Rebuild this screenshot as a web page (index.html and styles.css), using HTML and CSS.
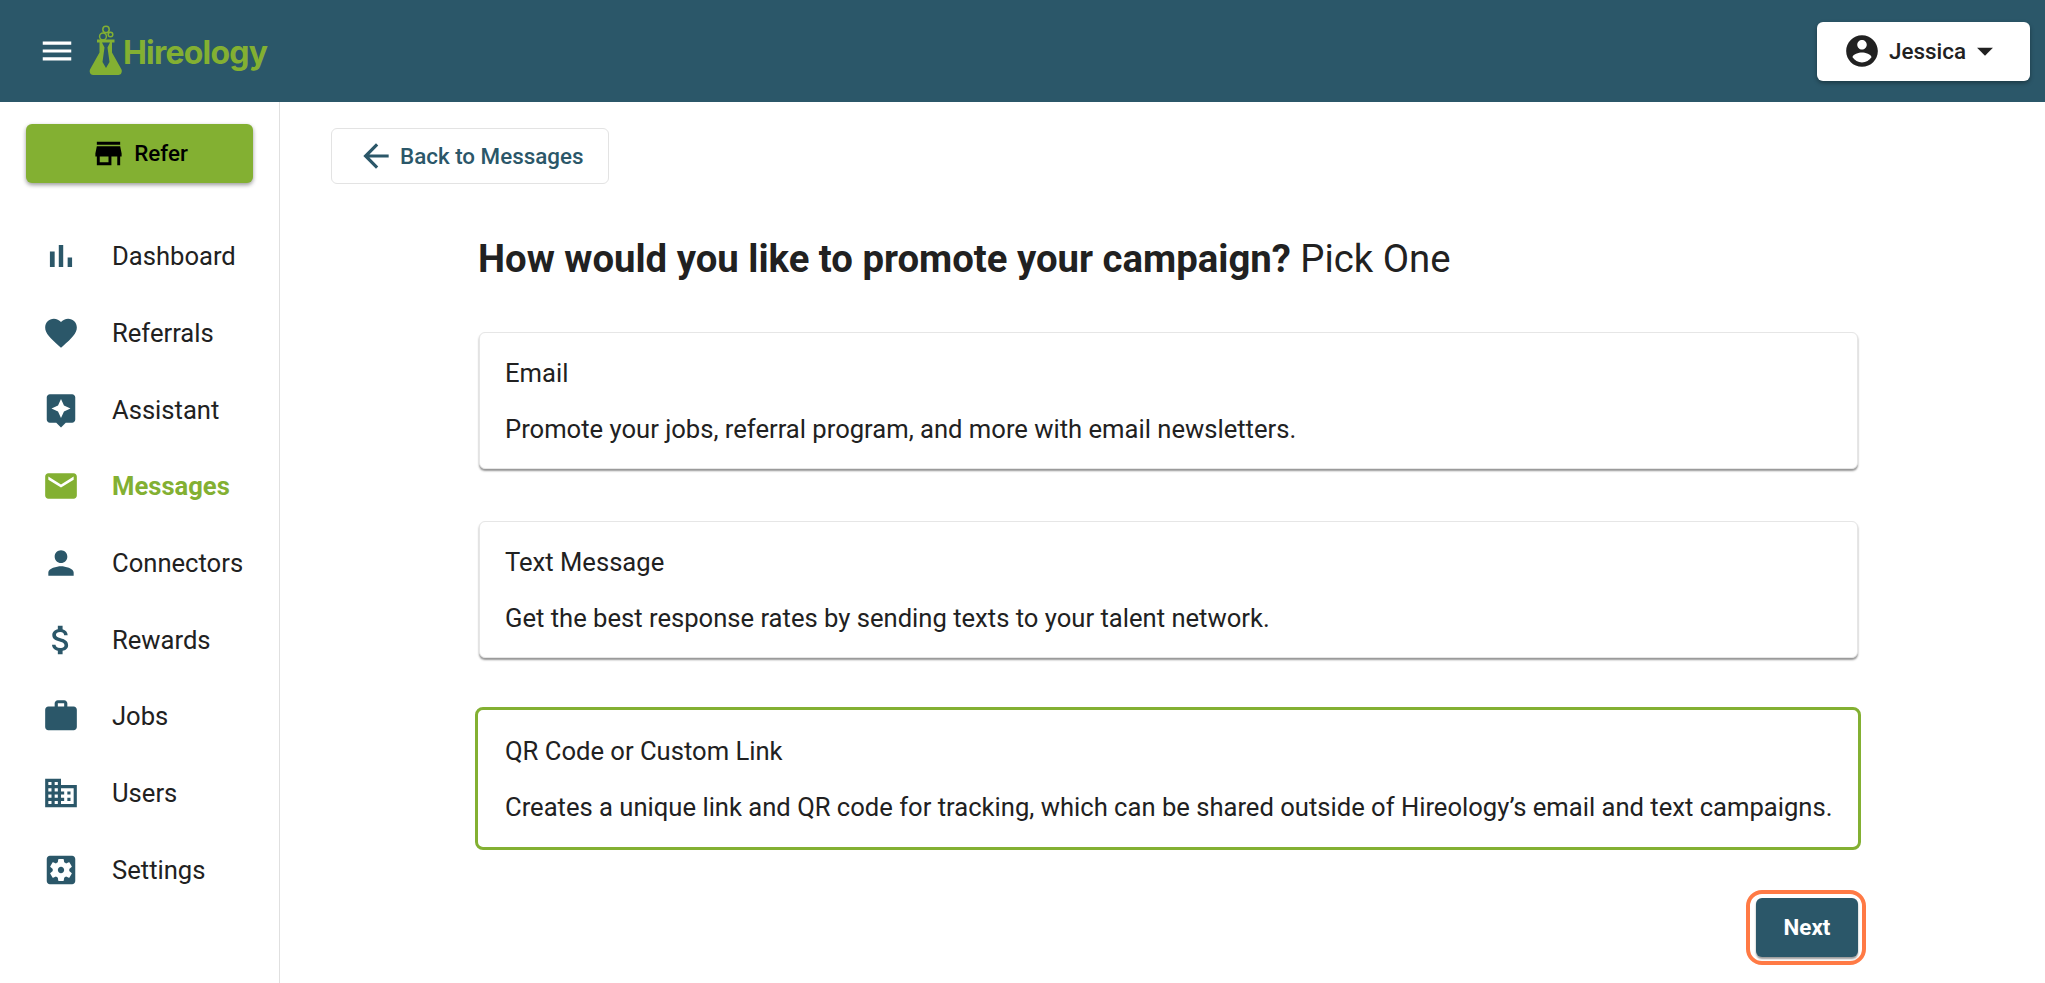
FILE: index.html
```html
<!DOCTYPE html>
<html lang="en">
<head>
    <meta charset="UTF-8">
    <title>Hireology - Promote your campaign</title>
    <link rel="stylesheet" href="styles.css">
</head>
<body>

<header class="topbar">
    <div class="topbar-left">
        <svg class="icon menu-icon" viewBox="0 0 24 24"><path d="M3 18h18v-2H3v2zm0-5h18v-2H3v2zm0-7v2h18V6H3z"/></svg>
        <div class="logo">
            <svg class="logo-flask" viewBox="0 0 34 52">
                <circle cx="17" cy="5.5" r="3.2" fill="none" stroke="#83b032" stroke-width="1.5"/>
                <circle cx="14" cy="12.5" r="3.4" fill="none" stroke="#83b032" stroke-width="1.5"/>
                <circle cx="21.5" cy="10.5" r="2.3" fill="none" stroke="#83b032" stroke-width="1.5"/>
                <path fill="#83b032" fill-rule="evenodd" d="M8 15.5h17.500v3h-2.500v10l9.500 17c1 2.500-.5 5.500-3 5.500H4c-2.500 0-4-3-3-5.500l9.500-17v-10H8zM13 18.500l2.500 5-2 14.500 3.500 6 3.500-6-2-14.500 2.500-5z"/>
            </svg>
            <span class="logo-text">Hireology</span>
        </div>
    </div>
    <button class="user-btn">
        <svg class="icon" viewBox="0 0 24 24"><path d="M12 2C6.480 2 2 6.480 2 12s4.480 10 10 10 10-4.480 10-10S17.520 2 12 2zm0 3c1.660 0 3 1.340 3 3s-1.340 3-3 3-3-1.340-3-3 1.340-3 3-3zm0 14.200c-2.500 0-4.710-1.280-6-3.220.030-1.990 4-3.080 6-3.080 1.990 0 5.970 1.090 6 3.080-1.290 1.940-3.500 3.220-6 3.220z"/></svg>
        <span>Jessica</span>
        <svg class="icon caret" viewBox="0 0 24 24"><path d="M7 10l5 5 5-5z"/></svg>
    </button>
</header>

<div class="layout">
    <aside class="sidebar">
        <button class="refer-btn">
            <svg class="refer-icon" viewBox="0 0 24 24"><path d="M20 4H4v2h16V4zm1 10v-2l-1-5H4l-1 5v2h1v6h10v-6h4v6h2v-6h1zm-9 4H6v-4h6v4z"/></svg>
            <span class="refer-label">Refer</span>
        </button>
        <nav class="nav">
            <a class="nav-item">
                <svg class="icon" viewBox="0 0 24 24"><path d="M5 9.200h3V19H5zM10.600 5h2.800v14h-2.800zm5.600 8H19v6h-2.800z"/></svg>
                <span>Dashboard</span>
            </a>
            <a class="nav-item">
                <svg class="icon" viewBox="0 0 24 24"><path d="M12 21.350l-1.450-1.320C5.400 15.360 2 12.280 2 8.500 2 5.420 4.420 3 7.500 3c1.740 0 3.410.81 4.500 2.090C13.090 3.810 14.760 3 16.500 3 19.580 3 22 5.420 22 8.500c0 3.780-3.400 6.860-8.550 11.540L12 21.350z"/></svg>
                <span>Referrals</span>
            </a>
            <a class="nav-item">
                <svg class="icon" viewBox="0 0 24 24"><path d="M19 2H5c-1.100 0-2 .9-2 2v14c0 1.100.9 2 2 2h4l3 3 3-3h4c1.100 0 2-.9 2-2V4c0-1.100-.9-2-2-2zm-5.120 10.880L12 17l-1.880-4.120L6 11l4.120-1.880L12 5l1.880 4.120L18 11l-4.120 1.880z"/></svg>
                <span>Assistant</span>
            </a>
            <a class="nav-item active">
                <svg class="icon" viewBox="0 0 24 24"><path d="M20 4H4c-1.100 0-1.990.9-1.990 2L2 18c0 1.100.9 2 2 2h16c1.100 0 2-.9 2-2V6c0-1.100-.9-2-2-2zm0 4l-8 5-8-5V6l8 5 8-5v2z"/></svg>
                <span>Messages</span>
            </a>
            <a class="nav-item">
                <svg class="icon" viewBox="0 0 24 24"><path d="M12 12c2.210 0 4-1.790 4-4s-1.790-4-4-4-4 1.790-4 4 1.790 4 4 4zm0 2c-2.670 0-8 1.340-8 4v2h16v-2c0-2.660-5.330-4-8-4z"/></svg>
                <span>Connectors</span>
            </a>
            <a class="nav-item">
                <svg class="icon" viewBox="0 0 24 24"><path d="M11.800 10.900c-2.270-.59-3-1.200-3-2.150 0-1.090 1.010-1.850 2.700-1.850 1.780 0 2.440.85 2.500 2.100h2.210c-.07-1.720-1.120-3.300-3.210-3.810V3h-3v2.160c-1.940.42-3.500 1.680-3.500 3.610 0 2.310 1.910 3.460 4.700 4.130 2.500.6 3 1.480 3 2.410 0 .69-.49 1.790-2.700 1.790-2.060 0-2.870-.92-2.980-2.100h-2.200c.12 2.190 1.760 3.420 3.680 3.830V21h3v-2.150c1.950-.37 3.500-1.500 3.500-3.550 0-2.840-2.430-3.810-4.700-4.400z"/></svg>
                <span>Rewards</span>
            </a>
            <a class="nav-item">
                <svg class="icon" viewBox="0 0 24 24"><path d="M20 6h-4V4c0-1.110-.89-2-2-2h-4c-1.110 0-2 .89-2 2v2H4c-1.110 0-1.990.89-1.990 2L2 19c0 1.110.89 2 2 2h16c1.110 0 2-.89 2-2V8c0-1.110-.89-2-2-2zm-6 0h-4V4h4v2z"/></svg>
                <span>Jobs</span>
            </a>
            <a class="nav-item">
                <svg class="icon" viewBox="0 0 24 24"><path d="M12 7V3H2v18h20V7H12zM6 19H4v-2h2v2zm0-4H4v-2h2v2zm0-4H4V9h2v2zm0-4H4V5h2v2zm4 12H8v-2h2v2zm0-4H8v-2h2v2zm0-4H8V9h2v2zm0-4H8V5h2v2zm10 12h-8v-2h2v-2h-2v-2h2v-2h-2V9h8v10zm-2-8h-2v2h2v-2zm0 4h-2v2h2v-2z"/></svg>
                <span>Users</span>
            </a>
            <a class="nav-item">
                <svg class="icon" viewBox="0 0 24 24"><path d="M12 10c-1.100 0-2 .9-2 2s.9 2 2 2 2-.9 2-2-.9-2-2-2zm7-7H5c-1.110 0-2 .9-2 2v14c0 1.100.89 2 2 2h14c1.110 0 2-.9 2-2V5c0-1.100-.89-2-2-2zm-1.750 9c0 .23-.02.46-.05.68l1.480 1.160c.13.11.17.3.08.45l-1.400 2.420c-.09.15-.27.21-.43.15l-1.740-.7c-.36.28-.76.51-1.180.69l-.26 1.850c-.03.17-.18.3-.35.3h-2.800c-.17 0-.32-.13-.35-.29l-.26-1.850c-.43-.18-.82-.41-1.180-.69l-1.740.7c-.16.06-.34 0-.43-.15l-1.400-2.420c-.09-.15-.05-.34.08-.45l1.480-1.160c-.03-.23-.05-.46-.05-.69 0-.23.02-.46.05-.68l-1.480-1.160c-.13-.11-.17-.3-.08-.45l1.400-2.420c.09-.15.27-.21.43-.15l1.740.7c.36-.28.76-.51 1.180-.69l.26-1.850c.03-.17.18-.3.35-.3h2.800c.17 0 .32.13.35.29l.26 1.850c.43.18.82.41 1.180.69l1.740-.7c.16-.06.34 0 .43.15l1.400 2.420c.09.15.05.34-.08.45l-1.480 1.160c.03.23.05.46.05.69z"/></svg>
                <span>Settings</span>
            </a>
        </nav>
    </aside>

    <main class="main">
        <button class="back-btn">
            <svg class="icon" viewBox="0 0 24 24"><path d="M20 11H7.830l5.590-5.590L12 4l-8 8 8 8 1.410-1.410L7.830 13H20v-2z"/></svg>
            <span>Back to Messages</span>
        </button>

        <section class="promote">
            <h1 class="promote-title"><strong>How would you like to promote your campaign?</strong> Pick One</h1>

            <div class="option-card">
                <div class="option-name">Email</div>
                <div class="option-desc">Promote your jobs, referral program, and more with email newsletters.</div>
            </div>
            <div class="option-card">
                <div class="option-name">Text Message</div>
                <div class="option-desc">Get the best response rates by sending texts to your talent network.</div>
            </div>
            <div class="option-card selected">
                <div class="option-name">QR Code or Custom Link</div>
                <div class="option-desc">Creates a unique link and QR code for tracking, which can be shared outside of Hireology’s email and text campaigns.</div>
            </div>

            <div class="actions">
                <div class="next-ring">
                    <button class="next-btn">Next</button>
                </div>
            </div>
        </section>
    </main>
</div>

</body>
</html>
```

FILE: styles.css
```css
* {
    box-sizing: border-box;
}

body {
    font-family: Roboto, sans-serif;
    margin: 0;
    height: 100vh;
    display: flex;
    flex-direction: column;
    overflow: hidden;
    background: #fff;
    color: #212121;
}

button {
    font-family: inherit;
    cursor: pointer;
}

.icon {
    width: 38px;
    height: 38px;
    flex: none;
    fill: currentColor;
}

/* top bar */
.topbar {
    height: 102px;
    flex: none;
    background: #2b5769;
    display: flex;
    justify-content: space-between;
    align-items: center;
    padding: 0 15px 0 38px;
}
.topbar-left {
    display: flex;
    align-items: center;
    gap: 13px;
}
.menu-icon {
    color: #fff;
}
.logo {
    display: flex;
    align-items: flex-end;
    gap: 0;
    margin-top: -2px;
}
.logo-flask {
    width: 34px;
    height: 52px;
    display: block;
}
.logo-text {
    font-family: Inter, sans-serif;
    font-size: 32px;
    font-weight: 700;
    letter-spacing: -0.8px;
    line-height: 38px;
    color: #83b032;
    margin-bottom: 4px;
}
.user-btn {
    width: 213px;
    height: 59px;
    background: #fff;
    border: none;
    border-radius: 6px;
    box-shadow: 0 2px 4px rgba(0, 0, 0, 0.35);
    display: flex;
    align-items: center;
    justify-content: center;
    gap: 8px;
    font-size: 22.4px;
    font-weight: 500;
    color: #212121;
    padding: 0;
}
.caret {
    margin-left: -8px;
}

/* sidebar */
.layout {
    flex: 1;
    display: flex;
    min-height: 0;
}
.sidebar {
    width: 280px;
    flex: none;
    border-right: 1px solid #e0e0e0;
    padding: 22px 26px 0;
}
.refer-btn {
    width: 227px;
    height: 59px;
    background: #83b032;
    border: none;
    border-radius: 6px;
    box-shadow: 0 2px 4px rgba(0, 0, 0, 0.4);
    display: flex;
    align-items: center;
    justify-content: center;
    gap: 8px;
    font-size: 22.4px;
    font-weight: 500;
    color: #000;
    padding: 0;
}
.refer-icon {
    width: 35px;
    height: 35px;
    fill: #000;
}
.refer-label {
    margin-bottom: 2px;
}
.nav {
    margin-top: 35px;
    margin-left: -26px;
    display: flex;
    flex-direction: column;
}
.nav-item {
    height: 76.7px;
    display: flex;
    align-items: center;
    gap: 32px;
    padding-left: 42px;
    font-size: 25.6px;
    color: #212121;
}
.nav-item .icon {
    color: #2b5769;
}
.nav-item.active span {
    color: #83b032;
    font-weight: 700;
}
.nav-item.active .icon {
    color: #83b032;
}

/* main column */
.main {
    flex: 1;
    min-width: 0;
    padding: 26px 0 0 51px;
}
.back-btn {
    width: 278px;
    height: 56px;
    background: #fff;
    border: 1px solid #e3e3e3;
    border-radius: 6px;
    display: flex;
    align-items: center;
    gap: 5px;
    padding: 0 0 0 25px;
    font-size: 22.4px;
    font-weight: 500;
    color: #2b5769;
}
.promote {
    width: 1379px;
    margin-left: 148px;
}
.promote-title {
    margin: 52px 0 51px -1px;
    font-size: 38.3px;
    line-height: 45px;
    font-weight: 400;
}
.promote-title strong {
    font-weight: 700;
}
.option-card {
    height: 137px;
    margin-bottom: 52px;
    padding: 23px 25px 0;
    background: #fff;
    border: 1px solid #e6e6e6;
    border-radius: 6px;
    box-shadow: 0 2px 2px rgba(0, 0, 0, 0.42);
    font-size: 25.6px;
    line-height: 34px;
}
.option-card.selected {
    height: 142.5px;
    margin: -3px -3px 0 -4px;
    padding: 24px 27px 0;
    border: 3px solid #83b032;
    border-radius: 8px;
    box-shadow: none;
}
.option-desc {
    margin-top: 22px;
    white-space: nowrap;
}
.actions {
    display: flex;
    justify-content: flex-end;
    margin: 40.5px -8px 0 0;
}
.next-ring {
    display: flex;
    padding: 4px 4px 4px 6px;
    border: 4px solid #ff7a45;
    border-radius: 16px;
}
.next-btn {
    width: 102px;
    height: 59px;
    padding: 0 0 2px;
    background: #2b5769;
    color: #fff;
    border: none;
    border-radius: 6px;
    box-shadow: 0 2px 2px rgba(0, 0, 0, 0.4);
    font-size: 22.4px;
    font-weight: 700;
}
```
